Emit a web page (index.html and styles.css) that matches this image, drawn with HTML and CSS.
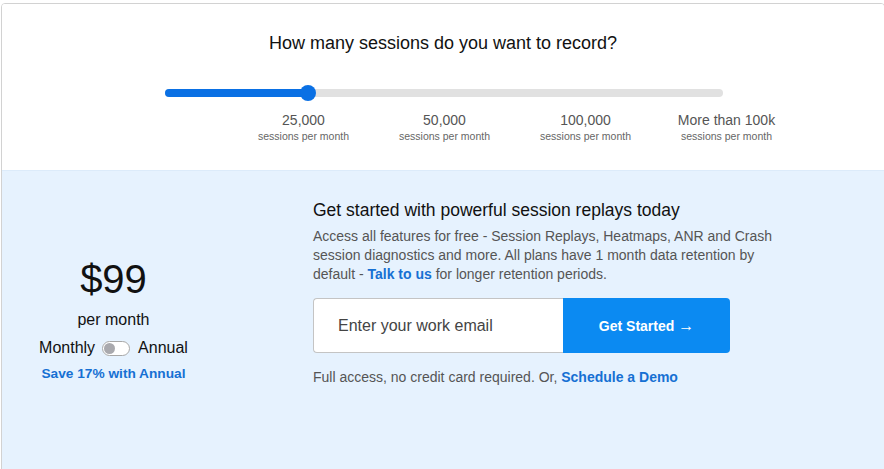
FILE: index.html
```html
<!DOCTYPE html>
<html lang="en">
<head>
<meta charset="utf-8">
<title>Pricing</title>
<link rel="stylesheet" href="styles.css">
</head>
<body>
<div class="card">
  <section class="sessions">
    <h2 class="title">How many sessions do you want to record?</h2>
    <div class="slider">
      <div class="track">
        <div class="fill" style="width: 143px"></div>
        <div class="thumb"></div>
      </div>
      <div class="ticks">
        <div class="tick"><div class="num">25,000</div><div class="sub">sessions per month</div></div>
        <div class="tick"><div class="num">50,000</div><div class="sub">sessions per month</div></div>
        <div class="tick"><div class="num">100,000</div><div class="sub">sessions per month</div></div>
        <div class="tick"><div class="num">More than 100k</div><div class="sub">sessions per month</div></div>
      </div>
    </div>
  </section>
  <section class="offer">
    <div class="plan">
      <div class="price">$99</div>
      <div class="per">per month</div>
      <div class="billing">
        <span>Monthly</span>
        <span class="toggle"><span class="knob"></span></span>
        <span>Annual</span>
      </div>
      <div class="save">Save 17% with Annual</div>
    </div>
    <div class="signup">
      <h3 class="heading">Get started with powerful session replays today</h3>
      <p class="desc">Access all features for free - Session Replays, Heatmaps, ANR and Crash session diagnostics and more. All plans have 1 month data retention by default - <a class="link" href="#">Talk to us</a> for longer retention periods.</p>
      <form class="form">
        <input class="email" type="text" placeholder="Enter your work email">
        <button class="btn" type="button">Get Started <span class="arrow">&rarr;</span></button>
      </form>
      <p class="note">Full access, no credit card required. Or, <a class="link" href="#">Schedule a Demo</a></p>
    </div>
  </section>
</div>
</body>
</html>
```

FILE: styles.css
```css
html, body {
  margin: 0;
  padding: 0;
  background: #fff;
  overflow: hidden;
  font-family: "Liberation Sans", Arial, sans-serif;
}
.card {
  margin: 3px 0 0 1px;
  width: 884px;
  height: 520px;
  border: 1px solid #d2d2d2;
  border-radius: 4px;
  overflow: hidden;
  box-sizing: border-box;
}
.sessions {
  height: 166px;
  padding-top: 28px;
  box-sizing: border-box;
  background: #fff;
}
.title {
  margin: 0;
  text-align: center;
  font-size: 18px;
  line-height: 22px;
  font-weight: normal;
  color: #111;
}
.slider {
  width: 558px;
  margin: 35px 0 0 163px;
}
.track {
  position: relative;
  height: 8px;
  border-radius: 4px;
  background: #e1e1e1;
}
.fill {
  height: 8px;
  border-radius: 4px;
  background: #0a70e4;
}
.thumb {
  position: absolute;
  left: 135px;
  top: -4px;
  width: 16px;
  height: 16px;
  border-radius: 50%;
  background: #0a70e4;
}
.ticks {
  display: flex;
  margin: 15px 0 0 68px;
}
.tick {
  flex: 0 0 141px;
  width: 141px;
  text-align: center;
}
.num {
  font-size: 14px;
  line-height: 17px;
  color: #555;
}
.sub {
  font-size: 10.5px;
  line-height: 14px;
  color: #666;
}
.offer {
  display: flex;
  padding-top: 28px;
  height: 360px;
  box-sizing: border-box;
  background: #e6f2fe;
  border-top: 1px solid #dcebfa;
}
.plan {
  width: 223px;
  text-align: center;
  padding-top: 57px;
  color: #111;
}
.price {
  font-size: 40px;
  line-height: 46px;
}
.per {
  margin-top: 8px;
  font-size: 16px;
  line-height: 20px;
}
.billing {
  margin-top: 8px;
  display: flex;
  align-items: center;
  justify-content: center;
  font-size: 16px;
  line-height: 20px;
}
.toggle {
  position: relative;
  display: inline-block;
  width: 26px;
  height: 13px;
  margin: 0 8px 0 7px;
  border: 1px solid #a8a8a8;
  border-radius: 8px;
  background: #fff;
}
.knob {
  position: absolute;
  left: 1px;
  top: 1px;
  width: 11px;
  height: 11px;
  border-radius: 50%;
  background: #a9a9ae;
}
.save {
  margin-top: 7px;
  font-size: 13.7px;
  line-height: 18px;
  font-weight: bold;
  color: #1670d3;
}
.signup {
  margin-left: 88px;
  width: 480px;
}
.heading {
  margin: 0;
  font-size: 17.5px;
  line-height: 22px;
  font-weight: normal;
  color: #111;
}
.desc {
  margin: 6px 0 0;
  width: 470px;
  font-size: 14px;
  line-height: 19px;
  color: #555;
}
.link {
  color: #1670d3;
  font-weight: bold;
  text-decoration: none;
}
.form {
  display: flex;
  margin: 14px 0 0;
  height: 55px;
}
.email {
  width: 250px;
  height: 55px;
  box-sizing: border-box;
  padding: 0 0 0 24px;
  border: 1px solid #c4c4c4;
  border-right: none;
  border-radius: 4px 0 0 4px;
  background: #fff;
  font-family: "Liberation Sans", Arial, sans-serif;
  font-size: 16px;
  color: #333;
  outline: none;
}
.email::placeholder {
  color: #444;
}
.btn {
  width: 167px;
  height: 55px;
  border: none;
  border-radius: 0 4px 4px 0;
  background: #0b8af2;
  color: #fff;
  font-family: "Liberation Sans", Arial, sans-serif;
  font-size: 14px;
  font-weight: bold;
  cursor: pointer;
}
.arrow {
  font-size: 16px;
  font-weight: normal;
}
.note {
  margin: 15px 0 0;
  font-size: 14px;
  line-height: 19px;
  color: #555;
}
```
